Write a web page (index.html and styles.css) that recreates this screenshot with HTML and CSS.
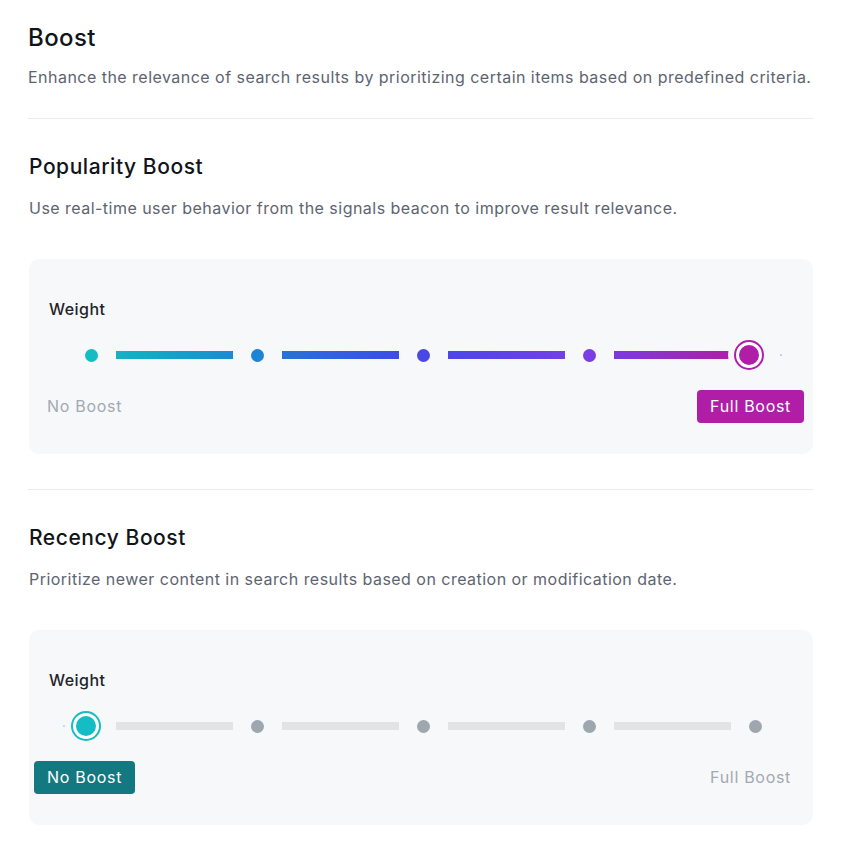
FILE: index.html
```html
<!DOCTYPE html>
<html lang="en">

<head>
    <meta charset="UTF-8">
    <meta name="viewport" content="width=device-width, initial-scale=1.0">
    <title>Boost</title>
    <link rel="stylesheet" href="styles.css">
</head>

<body>
    <main class="page">
        <!-- Page header -->
        <header class="page-header">
            <h1>Boost</h1>
            <p class="desc">Enhance the relevance of search results by prioritizing certain items based on predefined criteria.</p>
        </header>

        <!-- Popularity -->
        <section class="boost-section">
            <h2>Popularity Boost</h2>
            <p class="desc">Use real-time user behavior from the signals beacon to improve result relevance.</p>

            <div class="weight-card">
                <div class="weight-label">Weight</div>
                <div class="slider">
                    <span class="dot c1"></span>
                    <span class="seg s1"></span>
                    <span class="dot c2"></span>
                    <span class="seg s2"></span>
                    <span class="dot c3"></span>
                    <span class="seg s3"></span>
                    <span class="dot c4"></span>
                    <span class="seg s4"></span>
                    <span class="dot c5"></span>
                    <span class="thumb thumb-full"></span>
                    <span class="speck speck-full"></span>
                </div>
                <div class="slider-labels">
                    <span class="tag">No Boost</span>
                    <span class="tag tag-full">Full Boost</span>
                </div>
            </div>
        </section>

        <!-- Recency -->
        <section class="boost-section">
            <h2>Recency Boost</h2>
            <p class="desc">Prioritize newer content in search results based on creation or modification date.</p>

            <div class="weight-card">
                <div class="weight-label">Weight</div>
                <div class="slider off">
                    <span class="dot"></span>
                    <span class="seg"></span>
                    <span class="dot"></span>
                    <span class="seg"></span>
                    <span class="dot"></span>
                    <span class="seg"></span>
                    <span class="dot"></span>
                    <span class="seg"></span>
                    <span class="dot"></span>
                    <span class="thumb thumb-none"></span>
                    <span class="speck speck-none"></span>
                </div>
                <div class="slider-labels">
                    <span class="tag tag-none">No Boost</span>
                    <span class="tag">Full Boost</span>
                </div>
            </div>
        </section>
    </main>
</body>

</html>
```

FILE: styles.css
```css
/* Base */
body {
    margin: 0;
    font-family: Inter, 'Noto Sans', sans-serif;
    letter-spacing: 0.47px;
    color: #111418;
    background-color: #ffffff;
}

.page {
    width: 785px;
    margin-left: 28px;
    padding-top: 22px;
}

h1 {
    margin: 0;
    font-size: 24px;
    line-height: 32px;
    font-weight: 500;
    letter-spacing: 0.4px;
}

h2 {
    margin: 0;
    font-size: 21px;
    line-height: 28px;
    font-weight: 500;
    letter-spacing: 0.55px;
}

.desc {
    margin: 0;
    font-size: 16px;
    line-height: 24px;
    color: #5d6470;
}

.page-header {
    padding-bottom: 29px;
    border-bottom: 1px solid #eaecef;
}

.page-header .desc {
    margin-top: 11px;
}

/* Sections */
.boost-section {
    padding: 34px 0 35px 1px;
    border-bottom: 1px solid #eaecef;
}

.boost-section:last-child {
    border-bottom: none;
}

.boost-section .desc {
    margin-top: 15px;
}

/* Weight card */
.weight-card {
    margin-top: 39px;
    padding: 38px 9px 31px 5px;
    background-color: #f7f8fa;
    border-radius: 10px;
}

.weight-label {
    margin-left: 15px;
    font-size: 16px;
    line-height: 24px;
    font-weight: 500;
    color: #222428;
}

/* Slider */
.slider {
    position: relative;
    display: flex;
    align-items: center;
    gap: 18px;
    height: 30px;
    margin: 19px 0 0 50.5px;
}

.dot {
    width: 13px;
    height: 13px;
    border-radius: 50%;
    background-color: #9ea6ae;
    flex-shrink: 0;
}

.seg {
    width: 117px;
    height: 8px;
    background-color: #e2e3e5;
    flex-shrink: 0;
}

.dot.c1 { background-color: #14bcc4; }
.dot.c2 { background-color: #1d84d8; }
.dot.c3 { background-color: #4848e4; }
.dot.c4 { background-color: #7a3ee4; }
.dot.c5 { background-color: #b01ea8; }

.seg.s1 { background: linear-gradient(90deg, #14b2c4, #1c8bd2); }
.seg.s2 { background: linear-gradient(90deg, #2673d8, #3d4de2); }
.seg.s3 { background: linear-gradient(90deg, #4c48e4, #7340e4); }
.seg.s4 { background: linear-gradient(90deg, #7b3ae0, #b01ea8); }

.thumb {
    position: absolute;
    top: 2px;
    width: 20px;
    height: 20px;
    border: 3px solid #ffffff;
    border-radius: 50%;
    box-shadow: 0 0 0 2px var(--thumb), 0 0 0 8px #f7f8fa;
    background-color: var(--thumb);
}

.thumb-full {
    --thumb: #b01ea8;
    left: 651.5px;
}

.thumb-none {
    --thumb: #14bcc4;
    left: -11.5px;
}

.speck {
    position: absolute;
    top: 14px;
    width: 2px;
    height: 2px;
    border-radius: 50%;
}

.speck-full {
    left: 695px;
    background-color: #e6a8e2;
}

.speck-none {
    left: -22px;
    background-color: #9fdde0;
}

/* Labels under slider */
.slider-labels {
    display: flex;
    justify-content: space-between;
    margin-top: 20px;
}

.tag {
    padding: 0 13px;
    height: 33px;
    line-height: 33px;
    font-size: 16px;
    letter-spacing: 0.7px;
    color: #a3a9b1;
    border-radius: 4px;
}

.tag-full {
    background-color: #b01ea8;
    color: #ffffff;
}

.tag-none {
    background-color: #147880;
    color: #ffffff;
}
```
